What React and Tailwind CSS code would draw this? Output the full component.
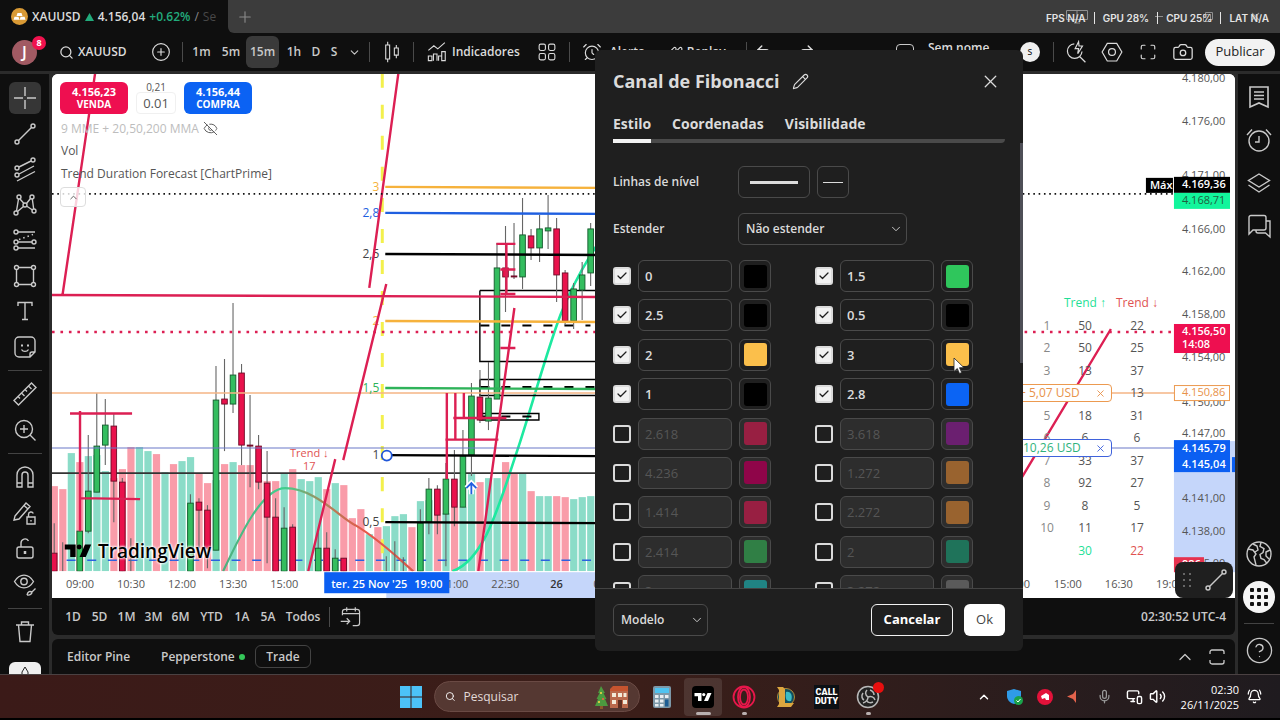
import React, { useState } from 'react';
import {
  Search, CirclePlus, ChevronDown, ChevronUp, Plus, X, Pencil, Check, Camera, Maximize, AlarmClock,
  Layers2, MessagesSquare, Mic, Volume2, BellRing, Undo2, Redo2, Rewind, EyeOff, CircleQuestionMark, MonitorSmartphone,
} from 'lucide-react';

// ---------- data ----------

// volume bars: [top y, up?]
const volumes = [
  [486, 0], [489, 0], [453, 1], [462, 0], [456, 1], [455, 1], [471, 1], [478, 0], [469, 0], [447, 0], [447, 1], [451, 1], [454, 0],
  [472, 1], [464, 0], [461, 1], [457, 1], [473, 0], [483, 0], [480, 1], [464, 0], [462, 1], [465, 0], [465, 0], [480, 0], [481, 0],
  [481, 0], [473, 1], [469, 0], [479, 1], [481, 1], [477, 1], [489, 0], [483, 1], [485, 0], [518, 0], [509, 0], [534, 1], [527, 0],
  [526, 1], [516, 1], [514, 1], [527, 0], [501, 1], [500, 1], [515, 0], [513, 1], [507, 0], [507, 1], [474, 1], [482, 0], [478, 1],
  [478, 1], [462, 0], [473, 0], [473, 1], [491, 0], [496, 1], [496, 1], [496, 0], [497, 0], [499, 1], [497, 1], [496, 1],
];

// candles: [index, up?, body top, body bottom, wick top, wick bottom]
const candles = [
  [0, 0, 553, 571, 523, 571], [1, 0, 571, 571, 542, 571], [3, 1, 531, 571, 508, 571], [4, 1, 491, 531, 435, 533],
  [5, 1, 446, 492, 393, 492], [6, 1, 425, 445, 399, 465], [7, 0, 426, 481, 413, 522], [8, 0, 482, 571, 478, 571],
  [9, 0, 571, 571, 538, 571], [16, 1, 503, 571, 494, 571], [17, 0, 502, 510, 498, 548], [18, 0, 510, 548, 505, 568],
  [19, 1, 400, 550, 366, 550], [20, 0, 399, 404, 359, 451], [21, 1, 375, 404, 303, 413], [22, 0, 373, 445, 364, 465],
  [23, 0, 445, 446, 395, 487], [24, 0, 446, 482, 435, 489], [25, 0, 483, 517, 451, 563], [26, 0, 517, 571, 498, 571],
  [27, 1, 528, 571, 507, 571], [28, 0, 527, 571, 524, 571], [31, 1, 548, 571, 532, 571], [32, 0, 548, 571, 532, 571],
  [33, 1, 558, 571, 549, 571], [34, 0, 558, 571, 558, 571], [39, 1, 571, 571, 556, 571], [40, 1, 571, 571, 541, 571],
  [41, 1, 571, 571, 557, 571], [43, 1, 523, 571, 509, 571], [44, 1, 489, 522, 478, 534], [45, 0, 489, 515, 485, 534],
  [46, 1, 479, 514, 463, 566], [47, 0, 479, 507, 450, 526], [48, 1, 456, 507, 430, 507], [49, 1, 396, 455, 383, 476],
  [50, 0, 397, 420, 370, 423], [51, 1, 398, 421, 362, 430], [52, 1, 268, 399, 243, 399], [53, 0, 268, 277, 226, 312],
  [54, 0, 276, 277, 223, 279], [55, 1, 235, 277, 198, 289], [56, 0, 236, 248, 229, 260], [57, 1, 229, 248, 215, 262],
  [58, 1, 228, 231, 195, 249], [59, 0, 229, 275, 218, 302], [60, 0, 273, 321, 270, 325], [61, 1, 289, 321, 283, 329],
  [62, 1, 275, 290, 262, 320], [63, 1, 229, 273, 223, 286],
];

const fibLines = [
  { label: '3', y: 187, color: '#f6b23c' },
  { label: '2,8', y: 213, color: '#1f5fe0' },
  { label: '2,5', y: 254, color: '#000000' },
  { label: '2', y: 321, color: '#f6b23c' },
  { label: '1,5', y: 388, color: '#2fb35a' },
  { label: '1', y: 455, color: '#000000' },
  { label: '0,5', y: 522, color: '#000000' },
];

const priceLabels = [
  ['4.180,00', 78], ['4.176,00', 121], ['4.171,00', 175], ['4.166,00', 229], ['4.162,00', 271], ['4.158,00', 314],
  ['4.154,00', 357], ['4.150,00', 402], ['4.147,00', 433], ['4.141,00', 498], ['4.138,00', 531], ['4.135,00', 563],
];

const timeLabels = [
  ['09:00', 80], ['10:30', 131], ['12:00', 182], ['13:30', 233], ['15:00', 284], ['21:00', 454], ['22:30', 505],
  ['00', 1023], ['15:00', 1067], ['16:30', 1118], ['19:00', 1169],
];

const trendRows = [
  ['1', '50', '22'], ['2', '50', '25'], ['3', '13', '37'], ['', '', '13'], ['5', '18', '31'],
  ['6', '6', '6'], ['7', '33', '37'], ['8', '92', '27'], ['9', '8', '5'], ['10', '11', '17'],
];

const initialLevels = [
  { value: '0', on: true, color: '#000000' }, { value: '1.5', on: true, color: '#2fc65c' },
  { value: '2.5', on: true, color: '#000000' }, { value: '0.5', on: true, color: '#000000' },
  { value: '2', on: true, color: '#fbbf4b' }, { value: '3', on: true, color: '#fbbf4b' },
  { value: '1', on: true, color: '#000000' }, { value: '2.8', on: true, color: '#0b64f4' },
  { value: '2.618', on: false, color: '#981f42' }, { value: '3.618', on: false, color: '#6b1f70' },
  { value: '4.236', on: false, color: '#8f0549' }, { value: '1.272', on: false, color: '#99632f' },
  { value: '1.414', on: false, color: '#981f42' }, { value: '2.272', on: false, color: '#99632f' },
  { value: '2.414', on: false, color: '#307f45' }, { value: '2', on: false, color: '#1f735a' },
  { value: '3', on: false, color: '#208383' }, { value: '3.272', on: false, color: '#5a5a5a' },
];

const ranges = [
  ['1D', 'w-[26px]'], ['5D', 'w-[27px]'], ['1M', 'w-[27px]'], ['3M', 'w-[27px]'], ['6M', 'w-[27px]'],
  ['YTD', 'w-[35px]'], ['1A', 'w-[26px]'], ['5A', 'w-[26px]'], ['Todos', 'w-[44px]'],
];

// ---------- icons ----------

const Glyph = ({ children, size = 28, className = '' }) => (
  <svg width={size} height={size} viewBox="0 0 28 28" fill="none" stroke="currentColor" strokeWidth="1.4" className={className}>
    {children}
  </svg>
);

const CrossGlyph = () => <Glyph><path d="M14 3v9M14 16v9M3 14h9M16 14h9" /></Glyph>;
const TrendGlyph = () => (
  <Glyph><circle cx="6" cy="22" r="2" /><circle cx="22" cy="6" r="2" /><path d="M7.500 20.500l13-13" /></Glyph>
);
const ForkGlyph = () => (
  <Glyph>
    <circle cx="6" cy="13" r="2" /><circle cx="22" cy="5" r="2" /><circle cx="6" cy="20" r="2" />
    <path d="M8 12l12-6M8 19l15-8M6 26l18-9.500" />
  </Glyph>
);
const PatternGlyph = () => (
  <Glyph>
    <circle cx="8" cy="6" r="2" /><circle cx="21" cy="6" r="2" /><circle cx="5" cy="22" r="2" /><circle cx="14" cy="14" r="2" /><circle cx="23" cy="20" r="2" />
    <path d="M7.500 8L5.500 20M9 8l4 4.500M19.500 7.500l-4 5M21.300 8l1.400 10M12.500 15.500L6.500 20.500M15.500 15l6 4" />
  </Glyph>
);
const FibGlyph = () => (
  <Glyph>
    <circle cx="5" cy="6" r="2" /><circle cx="5" cy="16" r="2" /><circle cx="23" cy="16" r="2" /><circle cx="5" cy="22" r="2" />
    <path d="M7 6h17M7 16h14M7 22h17" /><path d="M8 13.500l14-5" strokeDasharray="1.500 3" />
  </Glyph>
);
const RectGlyph = () => (
  <Glyph>
    <circle cx="5.500" cy="5.500" r="2" /><circle cx="22.500" cy="5.500" r="2" /><circle cx="5.500" cy="22.500" r="2" /><circle cx="22.500" cy="22.500" r="2" />
    <path d="M7.500 5.500h13M7.500 22.500h13M5.500 7.500v13M22.500 7.500v13" />
  </Glyph>
);
const TextGlyph = () => <Glyph><path d="M7 9V5.500h14V9M14 5.500v17M11 22.500h6" /></Glyph>;
const StickerGlyph = () => (
  <Glyph>
    <path d="M8 4h12a4 4 0 0 1 4 4v11l-5 5H8a4 4 0 0 1-4-4V8a4 4 0 0 1 4-4zM24 19h-3a2 2 0 0 0-2 2v3M10.500 16.500c1.500 2.500 5.500 2.500 7 0" />
    <path d="M11 11.500v2M17 11.500v2" strokeWidth="2" />
  </Glyph>
);
const RulerGlyph = () => (
  <Glyph><path d="M3 20.500L20.500 3 25 7.500 7.500 25zM7 16.500l2 2M10.500 13l3 3M14 9.500l2 2M17.500 6l3 3" /></Glyph>
);
const ZoomGlyph = () => <Glyph><circle cx="13" cy="13" r="8.500" /><path d="M19 19l5.500 5.500M13 9v8M9 13h8" /></Glyph>;
const MagnetGlyph = () => (
  <Glyph><path d="M6 24V12a8 8 0 0 1 16 0v12h-5V12a3 3 0 0 0-6 0v12zM6 20h5M17 20h5" /></Glyph>
);
const PencilLockGlyph = () => (
  <Glyph>
    <path d="M4 17L15 4l4 3.500L8 20l-5 1zM13 6.500l4 3.500" /><path d="M16 18h8v7h-8zM17.500 18v-2.500a2.500 2.500 0 0 1 4.800-1M20 21v1.500" />
  </Glyph>
);
const LockGlyph = () => (
  <Glyph><rect x="6" y="12" width="16" height="11" rx="2" /><path d="M10 12V8a4 4 0 0 1 7.500-2" /><path d="M14 16v3" strokeWidth="2.500" /></Glyph>
);
const EyeGlyph = () => (
  <Glyph>
    <path d="M3.500 10.500c5-8.500 14-8.500 19 0-5 8.500-14 8.500-19 0z" /><circle cx="13" cy="10.500" r="3.200" />
    <path d="M16 24c1-4 3-4 5-3l3.500-3.500M21 21c0 2-2 3.500-5 3" />
  </Glyph>
);
const TrashGlyph = () => <Glyph><path d="M5 7h18M7.500 7l1.500 16.500h10L20.500 7M10.500 7V4h7v3" /></Glyph>;
const WatchlistGlyph = () => <Glyph><path d="M5 4h18v20l-9-4-9 4zM9 9h10M9 12.500h10M9 16h10" strokeWidth="1.600" /></Glyph>;
const AlarmGlyph = () => (
  <Glyph><circle cx="14" cy="15" r="10" /><path d="M14 10v6h-4M2 9l5-5.500M26 9l-5-5.500" /></Glyph>
);
const LayersGlyph = () => (
  <Glyph><path d="M14 5l10.500 6.500L14 18 3.500 11.500zM3.500 16L14 23l10.500-7" /></Glyph>
);
const ChatGlyph = () => (
  <Glyph><path d="M4 22V5.500A2 2 0 0 1 6 3.500h13a2 2 0 0 1 2 2V16a2 2 0 0 1-2 2H8zM21 9h4v16l-4.500-4H13a2 2 0 0 1-2-2v-1" /></Glyph>
);
const GlobeGlyph = () => (
  <Glyph>
    <circle cx="14" cy="14" r="12" />
    <path d="M3 9l5 1 3 4-2 3 2 8M8 4l4 2 1 4-3 2M16 2.500l-1 4 4 2-1 4-3 2 1 4 3 1 3 4M25 10l-4 2v4l3 3" />
  </Glyph>
);
const CandlesGlyph = () => (
  <Glyph size={22}><path d="M6 5h5v18H6zM8.500 1v4M8.500 23v4M17 9h5v9h-5zM19.500 5v4M19.500 18v4" /></Glyph>
);
const IndicatorsGlyph = () => (
  <Glyph size={22}><path d="M3 12l7-6 5 4 9-8M3 25v-6h4.500v6zM9.500 25v-8.500H14V25M16 25v-6h4v6M20 25V13.500h4.500V25z" /></Glyph>
);
const TemplatesGlyph = () => (
  <Glyph size={22}>
    <rect x="4" y="4" width="8" height="8" rx="2" /><rect x="16" y="4" width="8" height="8" rx="2" />
    <rect x="4" y="16" width="8" height="8" rx="2" /><rect x="16" y="16" width="8" height="8" rx="2" />
  </Glyph>
);
const QuickGlyph = () => (
  <Glyph size={24}><path d="M12 4.500a8.500 8.500 0 1 0 9 9M18.500 19.500L25 26M17 2l-4 8h4l-1 6 5.500-9H17.500z" /></Glyph>
);
const SettingsGlyph = () => (
  <Glyph size={24}><path d="M8.500 4h11L25.500 14l-6 10.500h-11L2.500 14z" /><circle cx="14" cy="14" r="4" /></Glyph>
);
const GotoGlyph = () => (
  <Glyph size={24}><path d="M4 12V8a3 3 0 0 1 3-3h14a3 3 0 0 1 3 3v13a3 3 0 0 1-3 3h-5M4 10h20M9 2.500v5M19 2.500v5M2 19h10M9 15.500l3.500 3.500L9 22.500" /></Glyph>
);

const leftTools = [
  [CrossGlyph, TrendGlyph, ForkGlyph, PatternGlyph, FibGlyph, RectGlyph, TextGlyph, StickerGlyph],
  [RulerGlyph, ZoomGlyph],
  [MagnetGlyph, PencilLockGlyph, LockGlyph, EyeGlyph],
];

const TradingViewMark = ({ className }) => (
  <svg viewBox="0 0 36 20" className={className} fill="currentColor">
    <path d="M1 2h14v16H8V8.500H1z" />
    <circle cx="19.500" cy="5.200" r="3.200" />
    <path d="M27 2h8l-7 16h-8z" />
  </svg>
);

// ---------- top ----------

const Divider = ({ className = '' }) => <span className={`h-5 w-px shrink-0 bg-[#4a4a4a] ${className}`} />;

const TabBar = () => (
  <div className="relative flex h-[33px] bg-[#0f0f0f]">
    <div className="flex w-[228px] items-center gap-1 overflow-hidden pl-[11px] text-xs font-semibold whitespace-nowrap text-[#dbdbdb]">
      <svg width="17" height="17" viewBox="0 0 17 17" className="shrink-0">
        <circle cx="8.500" cy="8.500" r="8.500" fill="#d99a35" />
        <path d="M6.500 5h4l1 3h-6zM3.500 8.800h4l1 3H2.600zM9.600 8.800h4l.9 3H8.700z" fill="#fff" />
      </svg>
      <span>XAUUSD</span>
      <svg width="9" height="8" viewBox="0 0 9 8" className="shrink-0"><path d="M4.500 0L9 8H0z" fill="#22ab7c" /></svg>
      <span>4.156,04</span>
      <span className="text-[#22ab7c]">+0.62%</span>
      <span className="font-normal text-[#8a8a8a]">/</span>
      <span className="font-normal text-[#484848]">Se</span>
    </div>
    <div className="flex flex-1 rounded-bl-md bg-[#3c3c3c]">
      <button aria-label="Nova aba" className="w-[34px] pl-2 text-[#8a8a8a]"><Plus size={18} strokeWidth={1.5} /></button>
      <div className="ml-auto flex items-center pr-[18px] text-[#8f8f8f]">
        <svg width="22" height="14" viewBox="0 0 22 14" fill="none" stroke="currentColor"><path d="M.5.500h21v9H.500zM11 .500v9M8 13h6" /></svg>
        <span className="mr-10 ml-[67px] h-px w-2 bg-[#8f8f8f]" />
        <svg width="10" height="10" viewBox="0 0 10 10" fill="none" stroke="currentColor"><path d="M.5 2.500h7v7h-7zM2.500 2V.500h7v7H8" /></svg>
        <X size={13} className="ml-9" />
      </div>
    </div>
    {/* performance overlay */}
    <div className="absolute top-[10px] right-[11px] flex items-center gap-2 font-['Inter'] text-[10px] leading-4 font-semibold text-[#e4e4e4]">
      <span>FPS N/A</span><span className="h-3 w-px bg-[#e4e4e4]" />
      <span>GPU 28%</span><span className="h-3 w-px bg-[#e4e4e4]" />
      <span>CPU 25%</span><span className="h-3 w-px bg-[#e4e4e4]" />
      <span>LAT N/A</span>
    </div>
  </div>
);

const Toolbar = () => (
  <header className="flex h-[38px] items-center overflow-hidden bg-[#0f0f0f] text-xs font-semibold whitespace-nowrap text-[#dbdbdb]">
    <div className="relative ml-3 grid size-[25px] shrink-0 place-items-center rounded-full bg-[#a15a63] text-base text-white">
      J
      <span className="absolute -top-1 -right-[9px] grid size-[14px] place-items-center rounded-full bg-[#f0124e] text-[9px] font-bold">8</span>
    </div>
    <button className="ml-[22px] flex w-[92px] shrink-0 items-center gap-1"><Search size={15} />XAUUSD</button>
    <button aria-label="Comparar" className="w-[31px] shrink-0"><CirclePlus size={20} strokeWidth={1.4} /></button>
    <Divider />
    <div className="ml-1 flex shrink-0 items-center text-[#c9c9c9]">
      <button className="w-[29px]">1m</button>
      <button className="w-[30px]">5m</button>
      <button className="h-8 w-[33px] rounded-md bg-[#3a3a3a]">15m</button>
      <button className="w-[30px]">1h</button>
      <button className="w-[14px]">D</button>
      <button className="w-[22px]">S</button>
      <button aria-label="Intervalos" className="flex w-[18px] justify-center"><ChevronDown size={13} /></button>
    </div>
    <Divider className="ml-[6px]" />
    <button aria-label="Velas" className="ml-[11px] shrink-0"><CandlesGlyph /></button>
    <Divider className="ml-[10px]" />
    <button className="ml-3 flex shrink-0 items-center gap-1"><IndicatorsGlyph />Indicadores</button>
    <button aria-label="Modelos" className="ml-4 shrink-0"><TemplatesGlyph /></button>
    <Divider className="ml-[11px]" />
    <button className="ml-3 flex shrink-0 items-center gap-2"><AlarmClock size={20} strokeWidth={1.4} />Alerta</button>
    <button className="ml-6 flex shrink-0 items-center gap-1"><Rewind size={14} />Replay</button>
    <Divider className="ml-5" />
    <button aria-label="Desfazer" className="ml-2 shrink-0"><Undo2 size={18} /></button>
    <button aria-label="Refazer" className="ml-6 shrink-0"><Redo2 size={18} /></button>
    <div className="ml-auto flex shrink-0 items-center">
      <span className="h-4 w-[18px] rounded-sm border border-[#c9c9c9]" />
      <span className="ml-[14px] w-[92px] pb-2">Sem nome</span>
      <span className="grid size-5 place-items-center rounded-full bg-[#efefef] text-[10px] font-normal text-black">s</span>
      <Divider className="ml-[13px]" />
      <button aria-label="Busca rápida" className="ml-[10px]"><QuickGlyph /></button>
      <button aria-label="Configurações" className="ml-3"><SettingsGlyph /></button>
      <button aria-label="Tela cheia" className="ml-[15px]"><Maximize size={18} strokeWidth={1.5} /></button>
      <button aria-label="Foto" className="ml-[15px]"><Camera size={22} strokeWidth={1.4} /></button>
      <button className="mr-[5px] ml-[11px] h-[27px] w-[70px] rounded-full bg-[#f2f2f2] text-[13px] font-normal text-[#222]">Publicar</button>
    </div>
  </header>
);

// ---------- side bars ----------

const ToolButton = ({ icon: Icon, active }) => (
  <button aria-label="Ferramenta" className={`grid size-8 shrink-0 place-items-center rounded-md ${active ? 'bg-[#363636]' : ''}`}>
    <Icon />
  </button>
);

const LeftBar = () => (
  <aside className="flex w-[49px] shrink-0 flex-col items-center overflow-hidden bg-[#0f0f0f] pt-2 text-[#c9c9c9]">
    <div className="flex h-[281px] shrink-0 flex-col justify-between">
      {leftTools[0].map((icon, i) => <ToolButton key={i} icon={icon} active={i === 0} />)}
    </div>
    <span className="my-[7px] h-px w-[34px] shrink-0 bg-[#434343]" />
    <div className="flex flex-col gap-1">
      {leftTools[1].map((icon, i) => <ToolButton key={i} icon={icon} />)}
    </div>
    <span className="my-[7px] h-px w-[34px] shrink-0 bg-[#434343]" />
    <div className="flex flex-col gap-1">
      {leftTools[2].map((icon, i) => <ToolButton key={i} icon={icon} />)}
    </div>
    <span className="my-[7px] h-px w-[34px] shrink-0 bg-[#434343]" />
    <ToolButton icon={TrashGlyph} />
    <div className="mt-[14px] flex h-0 w-8 grow justify-center overflow-hidden rounded-t-md bg-[#efefef] pt-1 text-[#222]">
      <svg width="20" height="20" viewBox="0 0 20 20" fill="none" stroke="currentColor" className="shrink-0"><path d="M10 1l3 5v5h5L10 19 2 11h5V6z" /></svg>
    </div>
  </aside>
);

const RightBar = () => (
  <aside className="flex w-[42px] shrink-0 flex-col items-center bg-[#0f0f0f] pt-[7px] pb-[9px] text-[#c9c9c9]">
    <div className="flex flex-col gap-[11px]">
      <ToolButton icon={WatchlistGlyph} />
      <ToolButton icon={AlarmGlyph} />
      <ToolButton icon={LayersGlyph} />
      <ToolButton icon={ChatGlyph} />
    </div>
    <div className="mt-auto flex flex-col items-center">
      <GlobeGlyph />
      <button aria-label="Aplicativos" className="mt-[13px] grid size-8 grid-cols-[4px_4px_4px] place-content-center gap-[3px] rounded-full bg-[#f5f5f5]">
        {Array.from({ length: 9 }, (_, i) => <span key={i} className="size-1 rounded-[1px] bg-[#111]" />)}
      </button>
      <span className="mt-[10px] mb-3 h-px w-[30px] bg-[#434343]" />
      <CircleQuestionMark size={29} strokeWidth={1.1} />
    </div>
  </aside>
);

// ---------- chart ----------

const STEP = 8.508;

const ChartDrawing = () => (
  <svg viewBox="52 74 1182 524" preserveAspectRatio="xMidYMid slice" className="absolute inset-0 h-full w-full text-[11px]">
    <defs>
      <linearGradient id="bend" gradientUnits="userSpaceOnUse" x1="222" y1="0" x2="413" y2="0">
        <stop offset="0" stopColor="#4fae7e" />
        <stop offset="0.32" stopColor="#3fd08e" />
        <stop offset="0.55" stopColor="#b08258" />
        <stop offset="0.75" stopColor="#e8564a" />
        <stop offset="1" stopColor="#d85a48" />
      </linearGradient>
      <clipPath id="plot"><rect x="52" y="74" width="1122" height="497" /></clipPath>
    </defs>
    <rect x="52" y="74" width="1182" height="524" fill="#fff" />
    <g clipPath="url(#plot)">
      {volumes.map(([top, up], i) => (
        <rect key={i} x={50.7 + i * STEP} y={top} width="7.2" height={571 - top} fill={up ? '#8bdcc8' : '#f99ca9'} />
      ))}
      <path d="M382 74V571" stroke="#f3f04c" strokeWidth="3" strokeDasharray="14 17" />
      <path d="M52 560H600" stroke="#2a62e0" strokeWidth="1.600" strokeDasharray="9 11.600" strokeDashoffset="6" />
      <path d="M223 571C240 535 262 488 285 488C315 488 340 518 355 525C380 540 400 560 413 571" fill="none" stroke="url(#bend)" strokeWidth="2.200" />
      <path d="M452 571C485 560 500 500 517 450C528 418 545 355 560 315C572 285 585 262 600 240" fill="none" stroke="#1de9a0" strokeWidth="2.600" />

      {/* boxes */}
      <g fill="none" stroke="#000" strokeWidth="1.400">
        <path d="M479.500 290.500H600M479.500 290.500V361.500H600M479.500 379.500H600M479.500 379.500V395.500H600M479.500 413.500h59v6.500h-59z" />
        <path d="M480 325.500H590M480 387H596M480 416.500H532" strokeWidth="2" strokeDasharray="9 12" />
      </g>
      <path d="M52 473H600" stroke="#333" strokeWidth="1.600" />

      {candles.map(([i, up, top, bottom, high, low]) => {
        const x = 54.2 + i * STEP;
        return (
          <g key={i}>
            <path d={`M${x} ${high}V${low}`} stroke="#666" strokeWidth="1.100" />
            {bottom - top > 0 && (
              <rect x={x - 2.8} y={top} width="5.600" height={bottom - top} fill={up ? '#34bd5f' : '#e9124c'} stroke={up ? '#14592c' : '#6d0a26'} strokeWidth="0.900" />
            )}
          </g>
        );
      })}

      <path d="M52 393H1174" stroke="#f5b585" strokeWidth="1.400" />
      <path d="M52 448H1174" stroke="#6a78c8" />

      {fibLines.map(({ label, y, color }) => (
        <g key={label}>
          <path d={`M385 ${y}L600 ${y + 1}`} stroke={color} strokeWidth="2.400" />
          <text x="379" y={y + 4} textAnchor="end" fontSize="12" fill={color === '#000000' ? '#444' : color}>{label}</text>
        </g>
      ))}

      {/* hand drawn trend lines */}
      <g fill="none" stroke="#dc1f53" strokeWidth="2.400">
        <path d="M95 74L62.500 295M52 295L600 297M398 74L369 288M386 284L343 460M335 459L308 571M514 308L478 571M1110 329L1020 479" />
        <path d="M70 413.500H132M80 411V531M80 498L140 499M446.500 393V479M455 393V439M463.500 393V418M453 418H506M445 439.500H498" />
        <path d="M496 244H515M506 244V294M500 269.500H515M500 294H515M500 348H515" />
      </g>
      <path d="M52 332H1170" stroke="#dc1f53" strokeWidth="2.600" strokeDasharray="2.600 5.850" />
      <path d="M52 194H1174" stroke="#111" strokeWidth="1.600" strokeDasharray="1.600 3.700" />

      <circle cx="386.500" cy="455.500" r="5" fill="#fff" stroke="#1f56d8" strokeWidth="1.800" />
      <path d="M471 494V484M466 488l5-5 5 5" fill="none" stroke="#fff" strokeWidth="5" />
      <path d="M471 494V483M466 488l5-5 5 5" fill="none" stroke="#1f5fe0" strokeWidth="1.800" />
      <g fill="#e05252" textAnchor="middle">
        <text x="309" y="457">Trend ↓</text>
        <text x="309" y="470">17</text>
      </g>
    </g>

    {/* time axis */}
    <rect x="386" y="572" width="514" height="26" fill="#c5d6fa" />
    <g fill="#555" textAnchor="middle">
      {timeLabels.map(([label, x]) => <text key={label + x} x={x} y="588">{label}</text>)}
      <text x="556" y="588" fontWeight="600" fill="#333">26</text>
      <text x="607" y="588">03:00</text>
    </g>
    <rect x="324" y="572" width="125" height="21" fill="#0b5ff2" />
    <text x="331" y="588" fill="#fff" fontWeight="600">ter. 25 Nov '25</text>
    <text x="414" y="588" fill="#fff" fontWeight="600">19:00</text>

    {/* price axis */}
    <rect x="1173" y="441" width="61" height="131" fill="#c5d6fa" />
    <g fill="#555">
      {priceLabels.map(([label, y]) => <text key={label} x="1181" y={y + 4}>{label}</text>)}
    </g>
    <rect x="1145" y="178" width="27" height="15" fill="#000" />
    <rect x="1173" y="177" width="56" height="16" fill="#000" />
    <rect x="1173" y="193" width="56" height="16" fill="#12f59c" />
    <rect x="1173" y="324" width="56" height="29" fill="#ee0f50" />
    <rect x="1173.500" y="385.500" width="55" height="15" fill="#fff" stroke="#ec9a50" />
    <rect x="1173" y="440" width="56" height="32" fill="#0b5ff2" />
    <rect x="1231" y="457" width="3" height="15" fill="#0b5ff2" />
    <rect x="1173" y="557" width="30" height="15" fill="#e6324f" />
    <g fill="#fff" fontWeight="600">
      <text x="1149" y="189">Máx</text>
      <text x="1181" y="188">4.169,36</text>
      <text x="1181" y="335">4.156,50</text>
      <text x="1181" y="348">14:08</text>
      <text x="1181" y="452">4.145,79</text>
      <text x="1181" y="468">4.145,04</text>
      <text x="1181" y="568">986</text>
    </g>
    <text x="1181" y="204" fill="#20603f">4.168,71</text>
    <text x="1181" y="396" fill="#e8924a">4.150,86</text>
  </svg>
);

const TrendTable = () => (
  <table className="absolute top-[218px] right-[72px] h-[270px] w-[128px] table-fixed text-center text-xs leading-4 text-[#555]">
    <tbody>
      <tr className="whitespace-nowrap">
        <th className="w-6" />
        <th className="font-normal text-[#1fdf97]">Trend ↑</th>
        <th className="font-normal text-[#e05252]">Trend ↓</th>
      </tr>
      {trendRows.map(([n, up, down], i) => (
        <tr key={i}><td className="text-[#888]">{n}</td><td>{up}</td><td>{down}</td></tr>
      ))}
      <tr><td /><td className="text-[#1fdf97]">30</td><td className="text-[#e05252]">22</td></tr>
    </tbody>
  </table>
);

const ChartLegend = () => (
  <div className="relative flex w-fit flex-col items-start pt-2 pl-2 text-xs text-[#555]">
    <div className="flex items-stretch">
      <button className="h-8 w-[68px] rounded-md bg-[#ee0f50] text-[11px] leading-[13px] font-bold text-white">
        <span className="block">4.156,23</span><span className="block text-[10px]">VENDA</span>
      </button>
      <div className="mx-2 w-10 text-center">
        <span className="block text-[10px] leading-[10px]">0,21</span>
        <span className="block rounded border border-[#f0f0f0] bg-white text-[13px] leading-5">0.01</span>
      </div>
      <button className="h-8 w-[68px] rounded-md bg-[#0b62f3] text-[11px] leading-[13px] font-bold text-white">
        <span className="block">4.156,44</span><span className="block text-[10px]">COMPRA</span>
      </button>
    </div>
    <div className="mt-[3px] flex h-[23px] items-center gap-1 pl-px text-[#bdbdbd]">
      9 MME + 20,50,200 MMA <EyeOff size={15} strokeWidth={1.5} className="text-[#555]" />
    </div>
    <span className="pl-px leading-[22px]">Vol</span>
    <span className="pl-px leading-[23px]">Trend Duration Forecast [ChartPrime]</span>
    <button aria-label="Recolher" className="mt-[2px] grid h-5 w-[26px] place-items-center rounded border border-[#ddd] bg-white/80">
      <ChevronUp size={11} />
    </button>
  </div>
);

const Chart = () => (
  <section className="relative min-h-[524px] flex-1 overflow-hidden rounded-t-md bg-white">
    <ChartDrawing />
    <TrendTable />
    <ChartLegend />

    <div className="absolute bottom-[35px] left-3 flex items-center gap-[6px] text-black [text-shadow:0_0_3px_#fff,0_0_3px_#fff,0_0_2px_#fff]">
      <TradingViewMark className="w-7" />
      <span className="text-[19px] leading-6 font-semibold">TradingView</span>
    </div>

    {/* open positions */}
    <div className="absolute top-[310px] right-[123px] flex h-[18px] w-[110px] items-center justify-between rounded border border-[#ec9a50] bg-white pr-[5px] pl-4 text-xs text-[#e8924a]">
      <span className="whitespace-nowrap">+ 5,07 USD</span><X size={11} />
    </div>
    <div className="absolute top-[365px] right-[123px] flex h-[18px] w-[110px] items-center justify-between rounded border border-[#3f62dc] bg-white pr-[5px] pl-5 text-xs text-[#2fb37c]">
      <span className="whitespace-nowrap">10,26 USD</span><X size={11} className="text-[#3f62dc]" />
    </div>

    <div className="absolute right-[2px] bottom-0 flex h-9 w-[58px] items-center gap-[11px] rounded-lg bg-[#1f1f1f] pl-2 text-[#c9c9c9]">
      <span className="grid grid-cols-2 gap-1">
        {Array.from({ length: 6 }, (_, i) => <span key={i} className="size-[2px] bg-[#666]" />)}
      </span>
      <TrendGlyph />
    </div>
  </section>
);

const RangeBar = () => (
  <div className="flex h-[37px] items-center rounded-b-md bg-[#0f0f0f] pl-2 text-xs font-semibold text-[#c9c9c9]">
    {ranges.map(([label, width]) => <button key={label} className={width}>{label}</button>)}
    <Divider className="mr-[9px] ml-1" />
    <button aria-label="Ir para"><GotoGlyph /></button>
    <span className="ml-auto pr-[9px]">02:30:52 UTC-4</span>
  </div>
);

const PanelTabs = () => (
  <div className="mt-1 flex h-[35px] items-center rounded-t-md bg-[#0f0f0f] pl-[15px] text-xs font-semibold text-[#c9c9c9]">
    <button className="w-[94px] text-left">Editor Pine</button>
    <button className="flex w-[94px] items-center gap-1">Pepperstone<span className="size-[6px] rounded-full bg-[#34c759]" /></button>
    <button className="h-[23px] w-14 rounded-md border border-[#434343]">Trade</button>
    <div className="ml-auto flex items-center gap-[13px] pr-[9px]">
      <ChevronUp size={20} strokeWidth={1.5} />
      <svg width="18" height="18" viewBox="0 0 18 18" fill="none" stroke="currentColor" strokeWidth="1.300">
        <path d="M2 6V4a2 2 0 0 1 2-2h2M12 2h2a2 2 0 0 1 2 2v2M16 12v2a2 2 0 0 1-2 2h-2M6 16H4a2 2 0 0 1-2-2v-2M6 2h6M6 16h6" />
      </svg>
    </div>
  </div>
);

// ---------- dialog ----------

const Level = ({ level, onToggle, onChange }) => (
  <div className="flex items-center">
    <span className="relative mr-[7px] size-[18px]">
      <input
        type="checkbox"
        aria-label={`Nível ${level.value}`}
        checked={level.on}
        onChange={onToggle}
        className="block size-[18px] appearance-none rounded-[3px] border-2 border-[#dbdbdb] checked:bg-[#f2f2f2]"
      />
      {level.on && <Check size={12} strokeWidth={2.5} className="pointer-events-none absolute top-[3px] left-[3px] text-[#1f1f1f]" />}
    </span>
    <input
      type="text"
      aria-label="Valor do nível"
      value={level.value}
      disabled={!level.on}
      onChange={onChange}
      className="h-8 w-[94px] rounded-md border border-[#4a4a4a] px-[6px] text-[13px] font-semibold text-[#dbdbdb] disabled:bg-[#2d2d2d] disabled:font-normal disabled:text-[#565656]"
    />
    <button
      aria-label="Cor"
      disabled={!level.on}
      className="ml-[7px] grid size-8 place-items-center rounded-md border border-[#4a4a4a] disabled:bg-[#2d2d2d]"
    >
      <span className="size-[23px] rounded-[3px]" style={{ background: level.color }} />
    </button>
  </div>
);

const FibDialog = () => {
  const [levels, setLevels] = useState(initialLevels);

  const update = (index, patch) => {
    setLevels(levels.map((l, i) => (i === index ? { ...l, ...patch } : l)));
  };

  return (
    <div role="dialog" aria-label="Canal de Fibonacci" className="absolute top-[50px] left-[595px] flex h-[601px] w-[428px] flex-col overflow-hidden rounded-md bg-[#1f1f1f] text-xs text-[#dbdbdb]">
      <div className="flex h-[62px] shrink-0 items-center pr-[22px] pl-[18px]">
        <h2 className="text-lg font-bold">Canal de Fibonacci</h2>
        <button aria-label="Renomear" className="ml-3"><Pencil size={17} strokeWidth={1.6} /></button>
        <button aria-label="Fechar" className="ml-auto"><X size={21} strokeWidth={1.5} /></button>
      </div>
      <div className="mx-[18px] flex h-[31px] shrink-0 gap-[21px] rounded-b-sm border-b-4 border-[#4a4a4a] text-sm leading-6 font-bold">
        <button className="-mb-1 flex border-b-4 border-[#f2f2f2]">Estilo</button>
        <button className="flex">Coordenadas</button>
        <button className="flex">Visibilidade</button>
      </div>
      <div className="relative min-h-0 flex-1 overflow-hidden pt-[23px] pl-[18px]">
        <div className="flex h-8 items-center">
          <span className="w-[125px] font-semibold">Linhas de nível</span>
          <button aria-label="Espessura" className="grid h-8 w-[72px] place-items-center rounded-md border border-[#4a4a4a]">
            <span className="h-[3px] w-12 bg-[#dbdbdb]" />
          </button>
          <button aria-label="Estilo da linha" className="ml-[7px] grid size-8 place-items-center rounded-md border border-[#4a4a4a]">
            <span className="h-px w-5 bg-[#dbdbdb]" />
          </button>
        </div>
        <div className="mt-[15px] flex h-8 items-center">
          <label htmlFor="extend" className="w-[125px] font-semibold">Estender</label>
          <div className="relative">
            <select id="extend" className="block h-8 w-[169px] appearance-none rounded-md border border-[#4a4a4a] bg-[#1f1f1f] px-[7px] font-semibold">
              <option>Não estender</option>
            </select>
            <ChevronDown size={14} strokeWidth={1.5} className="pointer-events-none absolute top-[9px] right-1" />
          </div>
        </div>
        <div className="mt-[15px] grid h-[347px] grid-cols-[202px_202px] content-between">
          {levels.map((level, i) => (
            <Level
              key={i}
              level={level}
              onToggle={() => update(i, { on: !level.on })}
              onChange={(e) => update(i, { value: e.target.value })}
            />
          ))}
        </div>
        <span className="absolute top-0 right-0 h-[220px] w-[3px] bg-[#4e4f57]" />
      </div>
      <div className="flex h-[63px] shrink-0 items-center border-t border-[#434343] px-[18px]">
        <div className="relative">
          <select aria-label="Modelo" className="block h-8 w-[95px] appearance-none rounded-md border border-[#4a4a4a] bg-[#1f1f1f] px-[7px] font-semibold">
            <option>Modelo</option>
          </select>
          <ChevronDown size={14} strokeWidth={1.5} className="pointer-events-none absolute top-[9px] right-1" />
        </div>
        <button className="ml-auto h-8 w-[82px] rounded-md border border-[#f2f2f2] text-[13px] font-bold text-white">Cancelar</button>
        <button className="ml-[11px] h-8 w-[41px] rounded-md bg-white text-[13px] text-[#444]">Ok</button>
      </div>
    </div>
  );
};

// ---------- windows taskbar ----------

const Taskbar = () => (
  <footer className="relative flex h-[46px] items-center justify-center border-t border-b-2 border-t-[#4a4142] border-b-black bg-linear-to-r from-[#3b1a18] via-[#3b1e19] to-[#1f1b1f] text-xs text-white">
    <div className="flex items-center">
      <svg width="22" height="22" viewBox="0 0 22 22" fill="#4cc2f8">
        <path d="M0 0h10.500v10.500H0zM11.500 0H22v10.500H11.500zM0 11.500h10.500V22H0zM11.500 11.500H22V22H11.500z" />
      </svg>
      <label className="ml-3 flex h-[31px] w-[206px] items-center rounded-full border border-[#6a4a44] bg-[#553832] pr-2 pl-[10px]">
        <Search size={15} />
        <input placeholder="Pesquisar" className="ml-2 w-full min-w-0 bg-transparent placeholder:text-[#e2dad8]" />
        <svg width="36" height="24" viewBox="0 0 36 24" className="shrink-0">
          <path d="M6 1l4 7H8.500l3 6H10l3 7H0l3-7H1.500l3-6H3z" fill="#4c9a3f" />
          <path d="M5 21h3v3H5z" fill="#8a5a2b" />
          <circle cx="6" cy="8" r="1" fill="#ffd54a" /><circle cx="8" cy="14" r="1" fill="#ff5a4a" /><circle cx="4" cy="17" r="1" fill="#ffd54a" />
          <path d="M15 4l3-3h15v5H15z" fill="#c5542f" /><path d="M15 6h18v17H15z" fill="#b9694c" />
          <path d="M17 8h4v4h-4zM23 8h4v4h-4zM28.500 8h3v4h-3zM17 15h4v4h-4zM28 15h4v4h-4z" fill="#f3ead8" />
          <path d="M23 15h4v8h-4z" fill="#5e2f22" />
        </svg>
      </label>
      <svg width="18" height="22" viewBox="0 0 18 22" className="ml-[13px]">
        <rect width="18" height="22" rx="2" fill="#7d98a8" /><rect x="2" y="2" width="14" height="5" fill="#4fc3f0" />
        <path d="M2 9h3.500v3H2zM7 9h3.500v3H7zM12 9h3.500v3H12zM2 13.500h3.500v3H2zM7 13.500h3.500v3H7zM2 18h3.500v2.500H2zM7 18h3.500v2.500H7z" fill="#e8eef2" />
        <path d="M12 13.500h3.500v7H12z" fill="#1d5d93" />
      </svg>
      <div className="ml-[13px] flex h-[38px] w-[38px] flex-col items-center rounded bg-white/10 pt-2">
        <span className="grid size-[22px] place-items-center rounded bg-black"><TradingViewMark className="w-[18px]" /></span>
        <span className="mt-1 h-[3px] w-[15px] rounded bg-[#b9b0b0]" />
      </div>
      <div className="ml-[10px] flex h-[38px] flex-col items-center pt-[7px]">
        <svg width="24" height="24" viewBox="0 0 24 24" fill="none" stroke="#e8174b" strokeWidth="1.800">
          <circle cx="12" cy="12" r="10.500" /><ellipse cx="12" cy="12" rx="6" ry="10" /><ellipse cx="12" cy="12" rx="4" ry="7.500" />
        </svg>
        <span className="mt-[3px] h-[3px] w-[5px] rounded bg-[#b9b0b0]" />
      </div>
      <svg width="22" height="22" viewBox="0 0 22 22" className="ml-[18px]">
        <circle cx="12" cy="11" r="8.500" fill="#0f4f60" stroke="#b38b35" /><path d="M12 6c5-1 7 4 5 9-5 1-6-3-5-9z" fill="#3bbcc4" />
        <path d="M3 1h6l2 2v14h9l-3 4H3l2-3V4z" fill="#dba63f" />
      </svg>
      <span className="ml-[18px] grid h-6 w-[25px] place-items-center bg-[#0c1014] text-center font-['Roboto'] text-[9px] leading-[9px] font-black">CALL DUTY</span>
      <div className="relative ml-[17px] flex h-[38px] flex-col items-center pt-[7px]">
        <svg width="24" height="24" viewBox="0 0 24 24" fill="none" stroke="#b8b8b8" strokeWidth="1.500">
          <circle cx="12" cy="12" r="10.500" fill="#222" />
          <path d="M12 12c-3-2-3-5-1-7M12 12c3-1 6 0 7 3M12 12c0 3-2 5-5 6M7 8c-2 3-1 6 1 7M14 5c3 1 4 3 4 5M17 17c-2 1-5 1-6-1" />
        </svg>
        <span className="mt-[3px] h-[3px] w-[5px] rounded bg-[#b9b0b0]" />
        <span className="absolute top-1 -right-1 size-[11px] rounded-full bg-[#e80f0f]" />
      </div>
    </div>
    <div className="absolute right-[18px] flex items-center">
      <ChevronUp size={14} strokeWidth={2.5} />
      <svg width="16" height="16" viewBox="0 0 16 16" className="ml-4">
        <path d="M7 0l7 2v5c0 4-3 7-7 8-4-1-7-4-7-8V2z" fill="#2f9be8" /><circle cx="11.500" cy="11.500" r="4.500" fill="#1aa34a" />
        <path d="M9.500 11.500l1.500 1.500 2.500-3" stroke="#fff" fill="none" />
      </svg>
      <svg width="16" height="16" viewBox="0 0 16 16" className="ml-[14px]">
        <circle cx="8" cy="8" r="8" fill="#e3123a" /><path d="M4 7l5-3 3 2v5H9L8 9l-3 1z" fill="#fff" />
      </svg>
      <svg width="10" height="13" viewBox="0 0 10 13" className="ml-[14px]"><path d="M9 0v13L6 9 0 6.500 6 4z" fill="#e2634c" /></svg>
      <Mic size={15} className="ml-[20px] text-[#999]" />
      <MonitorSmartphone size={17} className="ml-[14px]" />
      <Volume2 size={17} className="ml-[6px]" />
      <div className="ml-3 w-[61px] text-right text-[11px] leading-[15px]">
        <span className="block">02:30</span>
        <span className="block">26/11/2025</span>
      </div>
      <BellRing size={15} className="ml-2" />
    </div>
  </footer>
);

export default function App() {
  return (
    <div className="relative flex min-h-screen flex-col overflow-hidden bg-[#2b2b2b] font-['Open_Sans',sans-serif]">
      <TabBar />
      <Toolbar />
      <main className="mt-[3px] flex flex-1">
        <LeftBar />
        <div className="mx-[3px] flex min-w-0 flex-1 flex-col">
          <Chart />
          <RangeBar />
          <PanelTabs />
        </div>
        <RightBar />
      </main>
      <Taskbar />
      <FibDialog />
      {/* mouse pointer */}
      <svg width="12" height="18" viewBox="0 0 12 18" className="pointer-events-none absolute top-[357px] left-[953px]">
        <path d="M1 1v13.500l3.300-3 2.200 5 2.200-1-2.200-4.800H11z" fill="#fff" stroke="#222" strokeWidth="0.800" />
      </svg>
    </div>
  );
}
